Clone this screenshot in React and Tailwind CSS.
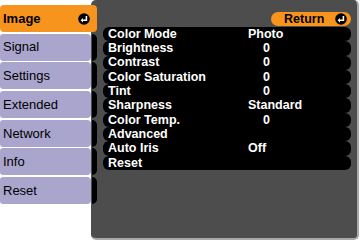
import React from 'react';

const tabs = ['Signal', 'Settings', 'Extended', 'Network', 'Info', 'Reset'];

const rows = [
    ['Color Mode', 'Photo', false],
    ['Brightness', '0', true],
    ['Contrast', '0', true],
    ['Color Saturation', '0', true],
    ['Tint', '0', true],
    ['Sharpness', 'Standard', false],
    ['Color Temp.', '0', true],
    ['Advanced', '', false],
    ['Auto Iris', 'Off', false],
    ['Reset', '', false],
];

const EnterIcon = () => (
    <svg width="12" height="12" viewBox="0 0 12 12">
        <circle cx="6" cy="6" r="5.8" fill="#000" />
        <path d="M8.4 3 V7.2 H4.6" stroke="#fff" strokeWidth="1.6" fill="none" />
        <path d="M5 4.9 L2.6 7.2 L5 9.5 Z" fill="#fff" />
    </svg>
);

const App = () => {
    return (
        <div className="w-[360px] h-[241px] bg-white flex font-['Liberation_Sans',Arial,sans-serif] overflow-hidden">
            {/* tabs */}
            <div className="relative z-10 w-[97px] pt-[5px] flex flex-col gap-[1.7px]">
                <div className="h-[27px] w-[97px] bg-[#f7941d] rounded-[4px] flex items-center justify-between pl-[3px] pr-[7px]">
                    <span className="text-[13px] font-bold text-black">Image</span>
                    <EnterIcon />
                </div>
                {tabs.map((t) => (
                    <div key={t} className="flex h-[27px]">
                        <div className="w-[91px] h-full bg-[#aaa5cc] rounded-l-[3px] rounded-r-[4px] flex items-center pl-[3px]">
                            <span className="text-[13px] text-black">{t}</span>
                        </div>
                        <div className="ml-[1px] w-[5px] h-full bg-black rounded-r-[5px]" />
                    </div>
                ))}
            </div>

            {/* panel */}
            <div className="-ml-[6px] w-[268px] h-[240px] bg-[#4d4d4d] rounded-[5px] border-r-2 border-b-2 border-[#a9a9a9] pt-[12px] pl-[12px] pr-[6px]">
                <div className="flex justify-end">
                    <div className="w-[80px] h-[14px] bg-[#f7941d] rounded-full flex items-center justify-between pl-[13px] pr-[4px]">
                        <span className="text-[12.5px] font-bold text-black leading-none">Return</span>
                        <EnterIcon />
                    </div>
                </div>
                <div className="mt-[1px] flex flex-col">
                    {rows.map(([label, value, num]) => (
                        <div key={label} className="h-[14.3px] bg-black rounded-[6px] flex items-center pl-[5px]">
                            <span className="w-[140px] text-[12.5px] font-bold text-white leading-none">{label}</span>
                            <span className={`text-[12.5px] font-bold text-white leading-none ${num ? 'ml-[15px]' : ''}`}>{value}</span>
                        </div>
                    ))}
                </div>
            </div>
        </div>
    );
};

export default App;
